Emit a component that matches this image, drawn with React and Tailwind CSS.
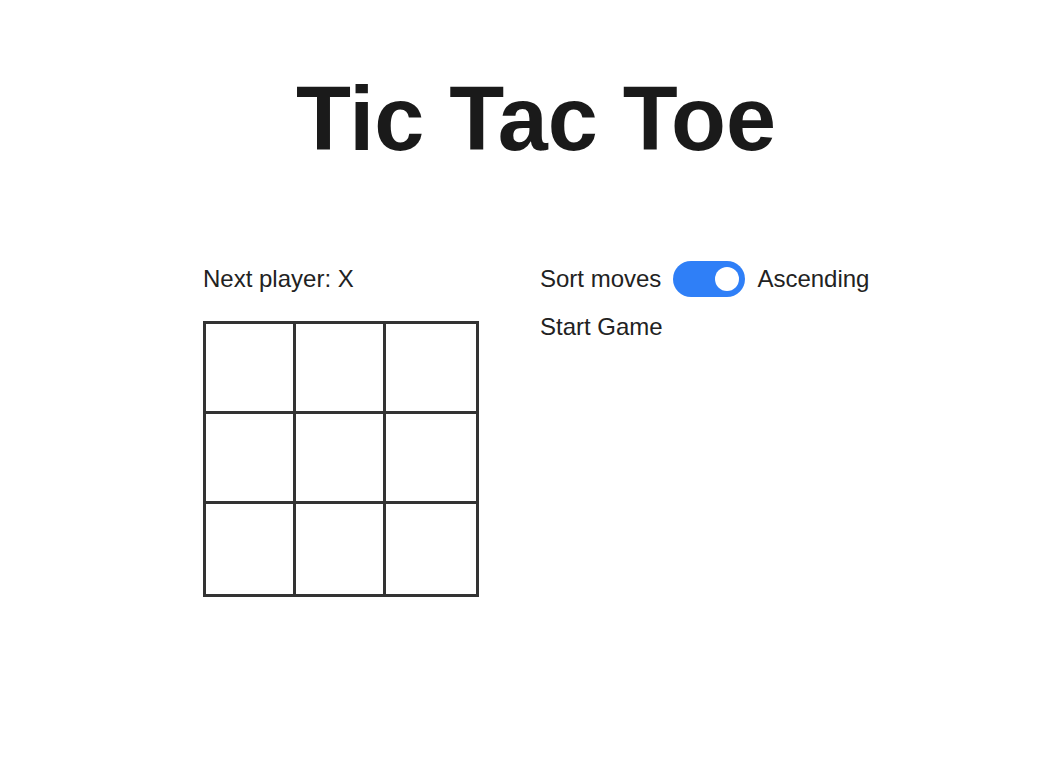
import React, { useState } from 'react';

const Square = ({ value, onClick, right, bottom }) => {
    return (
        <button
            onClick={onClick}
            className={
                'w-[90px] h-[90px] bg-white border-[#333] text-[48px] font-bold flex items-center justify-center ' +
                (right ? 'border-r-[3px] ' : '') +
                (bottom ? 'border-b-[3px]' : '')
            }
        >
            {value}
        </button>
    );
};

const App = () => {
    const [squares, setSquares] = useState(Array(9).fill(null));
    const [xNext, setXNext] = useState(true);
    const [ascending, setAscending] = useState(true);

    const play = (i) => {
        if (squares[i]) return;
        const next = squares.slice();
        next[i] = xNext ? 'X' : 'O';
        setSquares(next);
        setXNext(!xNext);
    };

    return (
        <div className="min-h-screen bg-white text-[#222] font-['Liberation_Sans',Arial,sans-serif]">
            <h1 className="pt-[74px] pl-[23px] text-center text-[90px] leading-none font-bold text-[#1a1a1a]">
                Tic Tac Toe
            </h1>
            <div className="flex pl-[203px] pt-[97px]">
                <div className="w-[276px] pt-[6px]">
                    <div className="text-[24px] leading-none">Next player: {xNext ? 'X' : 'O'}</div>
                    <div className="mt-[30px] w-[276px] border-[3px] border-[#333] grid grid-cols-3">
                        {squares.map((v, i) => (
                            <Square
                                key={i}
                                value={v}
                                right={i % 3 !== 2}
                                bottom={i < 6}
                                onClick={() => play(i)}
                            />
                        ))}
                    </div>
                </div>
                <div className="ml-[61px]">
                    <div className="flex items-center gap-3 h-[36px]">
                        <span className="text-[24px] leading-none">Sort moves</span>
                        <button
                            onClick={() => setAscending(!ascending)}
                            className={
                                'w-[72px] h-[36px] rounded-full flex items-center px-[6px] ' +
                                (ascending ? 'bg-[#2f7ff7] justify-end' : 'bg-[#ccc] justify-start')
                            }
                        >
                            <span className="w-[24px] h-[24px] rounded-full bg-white"></span>
                        </button>
                        <span className="text-[24px] leading-none">{ascending ? 'Ascending' : 'Descending'}</span>
                    </div>
                    <ol className="mt-[18px]">
                        <li>
                            <button className="text-[24px] leading-none">Start Game</button>
                        </li>
                    </ol>
                </div>
            </div>
        </div>
    );
};

export default App;
